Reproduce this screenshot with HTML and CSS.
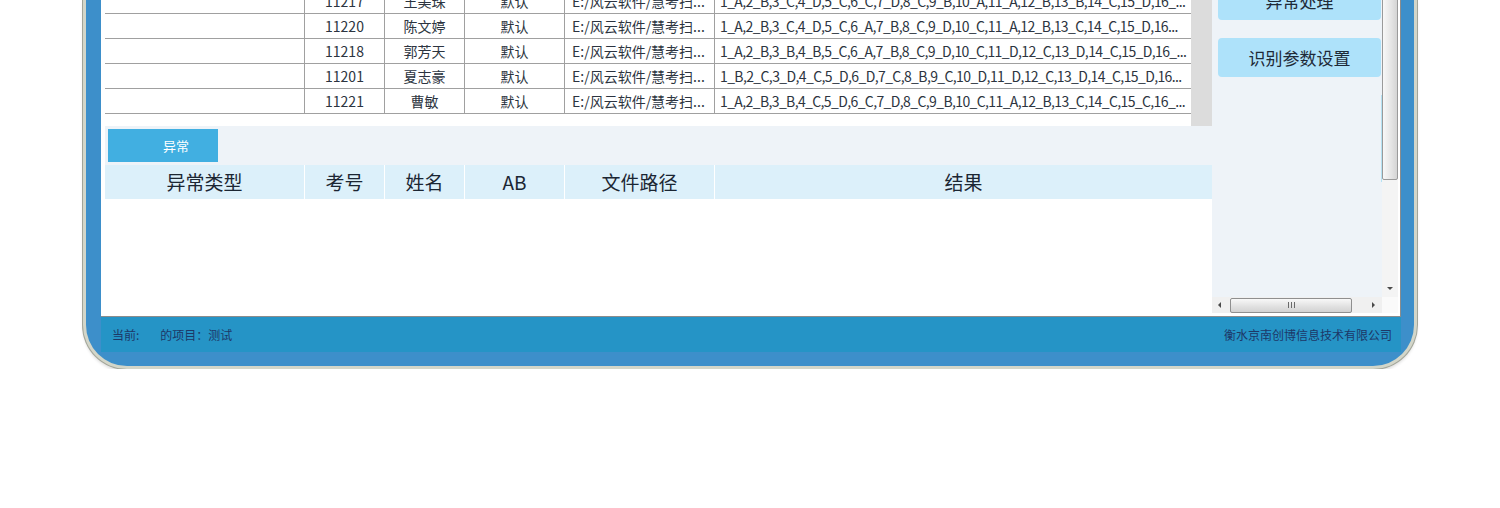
FILE: index.html
```html
<!DOCTYPE html>
<html lang="zh-CN">
<head>
    <meta charset="UTF-8">
    <title>识别结果</title>
    <link rel="stylesheet" href="styles.css">
</head>
<body>
<div class="window">
    <div class="panel">
        <div class="main">
            <!-- recognised sheets -->
            <div class="grid">
                <div class="rows">
                    <div class="row"><span class="c1"></span><span class="c2">11217</span><span class="c3">王美珠</span><span class="c4">默认</span><span class="c5">E:/风云软件/慧考扫...</span><span class="c6">1_A,2_B,3_C,4_D,5_C,6_C,7_D,8_C,9_B,10_A,11_A,12_B,13_B,14_C,15_D,16_...</span></div>
                    <div class="row"><span class="c1"></span><span class="c2">11220</span><span class="c3">陈文婷</span><span class="c4">默认</span><span class="c5">E:/风云软件/慧考扫...</span><span class="c6">1_A,2_B,3_C,4_D,5_C,6_A,7_B,8_C,9_D,10_C,11_A,12_B,13_C,14_C,15_D,16...</span></div>
                    <div class="row"><span class="c1"></span><span class="c2">11218</span><span class="c3">郭芳天</span><span class="c4">默认</span><span class="c5">E:/风云软件/慧考扫...</span><span class="c6">1_A,2_B,3_B,4_B,5_C,6_A,7_B,8_C,9_D,10_C,11_D,12_C,13_D,14_C,15_D,16_...</span></div>
                    <div class="row"><span class="c1"></span><span class="c2">11201</span><span class="c3">夏志豪</span><span class="c4">默认</span><span class="c5">E:/风云软件/慧考扫...</span><span class="c6">1_B,2_C,3_D,4_C,5_D,6_D,7_C,8_B,9_C,10_D,11_D,12_C,13_D,14_C,15_D,16...</span></div>
                    <div class="row"><span class="c1"></span><span class="c2">11221</span><span class="c3">曹敏</span><span class="c4">默认</span><span class="c5">E:/风云软件/慧考扫...</span><span class="c6">1_A,2_B,3_B,4_C,5_D,6_C,7_D,8_C,9_B,10_C,11_A,12_B,13_C,14_C,15_C,16_...</span></div>
                </div>
                <div class="grid-scroll"></div>
            </div>

            <div class="tabs"><div class="tab">异常</div></div>

            <!-- exceptions table (empty) -->
            <div class="head">
                <span class="c1">异常类型</span><span class="c2">考号</span><span class="c3">姓名</span><span class="c4">AB</span><span class="c5">文件路径</span><span class="c6">结果</span>
            </div>
            <div class="blank"></div>
        </div>

        <div class="side">
            <div class="side-top">
                <div class="side-body">
                    <button class="btn btn-first">异常处理</button>
                    <button class="btn">识别参数设置</button>
                    <div class="edge"></div>
                </div>
                <div class="vscroll">
                    <div class="thumb"></div>
                    <span class="arrow-down"></span>
                </div>
            </div>
            <div class="hscroll">
                <div class="htrack">
                    <span class="arrow-left"></span>
                    <div class="hthumb">
                        <svg width="7" height="6" viewBox="0 0 7 6"><path d="M0.5 0v6M3.5 0v6M6.5 0v6" stroke="#6a6a6a" stroke-width="1"/></svg>
                    </div>
                    <span class="arrow-right"></span>
                </div>
                <div class="hcorner"></div>
            </div>
        </div>
    </div>

    <div class="status">
        <span>当前:</span>
        <span class="project">的项目：测试</span>
        <span class="company">衡水京南创博信息技术有限公司</span>
    </div>
</div>
</body>
</html>
```

FILE: styles.css
```css
/* Basic styling */
body {
    margin: 0;
    background-color: #fff;
    font-family: "Noto Sans CJK SC", "Noto Sans", sans-serif;
    color: #2c3440;
}

/* Window frame */
.window {
    width: 1334px;
    margin-left: 83px;
    padding: 0 13px 14px 15px;
    box-sizing: border-box;
    background-color: #3d8fca;
    border: 3px solid #d3d6c9;
    border-top: none;
    border-radius: 0 0 44px 44px;
    box-shadow: 0 0 0 1px #a2a599, 0 3px 3px rgba(0, 0, 0, 0.12);
}

.panel {
    display: flex;
    width: 1300px;
    height: 317px;
    box-sizing: border-box;
    padding-right: 2px;
    background-color: #fff;
    border-right: 1px solid #8c8c8c;
    border-bottom: 1px solid #8c8c8c;
    overflow: hidden;
}

/* Left part: grids */
.main {
    width: 1111px;
    padding-left: 4px;
    box-sizing: border-box;
    display: flex;
    flex-direction: column;
}

.grid {
    display: flex;
    height: 137px;
    margin-top: -11px;
    flex-shrink: 0;
}

.rows {
    width: 1086px;
}

.grid-scroll {
    width: 21px;
    background-color: #dcdcdc;
}

.row {
    display: flex;
    height: 25px;
    box-sizing: border-box;
    border-bottom: 1px solid #a0a0a0;
    font-size: 14px;
    line-height: 24px;
}

.row span {
    box-sizing: border-box;
    border-right: 1px solid #a0a0a0;
    text-align: center;
    white-space: nowrap;
    overflow: hidden;
}

.c1 { width: 200px; }
.c2 { width: 80px; }
.c3 { width: 80px; }
.c4 { width: 100px; }
.c5 { width: 150px; }
.c6 { flex: 1; }

.row .c5 {
    text-align: left;
    padding: 0 2px 0 7px;
}

.row .c6 {
    text-align: left;
    padding: 0 2px 0 5px;
    border-right: none;
    letter-spacing: -0.62px;
}

.tabs {
    height: 39px;
    box-sizing: border-box;
    padding: 3px 0 0 3px;
    background-color: #eef3f8;
    flex-shrink: 0;
}

.tab {
    width: 110px;
    height: 33px;
    box-sizing: border-box;
    padding-left: 26px;
    background-color: #41afe1;
    color: #fff;
    font-size: 13px;
    line-height: 33px;
    text-align: center;
}

.head {
    display: flex;
    height: 34px;
    background-color: #dcf0fa;
    color: #1b2633;
    font-size: 19px;
    line-height: 34px;
    flex-shrink: 0;
}

.head span {
    box-sizing: border-box;
    border-right: 1px solid #fff;
    text-align: center;
}

.head .c6 {
    border-right: none;
}

.blank {
    flex: 1;
}

/* Right part: buttons and scrollbars */
.side {
    width: 186px;
    display: flex;
    flex-direction: column;
}

.side-top {
    display: flex;
    height: 297px;
}

.side-body {
    width: 170px;
    box-sizing: border-box;
    padding-left: 6px;
    display: flex;
    flex-direction: column;
    gap: 18px;
    background-color: #eef3f8;
    overflow: hidden;
}

.btn {
    width: 163px;
    height: 39px;
    flex-shrink: 0;
    border: none;
    border-radius: 4px;
    background-color: #aee2fa;
    color: #1e2a38;
    font-family: "Noto Sans CJK SC", "Noto Sans", sans-serif;
    font-size: 17px;
    padding: 0;
}

.btn-first {
    margin-top: -19px;
}

.edge {
    align-self: flex-end;
    width: 2px;
    height: 87px;
    border-right: 1px solid #b5e2f3;
}

.vscroll {
    width: 16px;
    display: flex;
    flex-direction: column;
    justify-content: space-between;
    align-items: center;
    background-color: #f4f4f4;
}

.thumb {
    width: 16px;
    height: 184px;
    margin-top: -4px;
    box-sizing: border-box;
    border: 1px solid #9a9a9a;
    border-radius: 2px;
    background: linear-gradient(to right, #f8f8f8, #e4e4e4 60%, #d4d4d4);
}

.arrow-down {
    width: 0;
    height: 0;
    border-left: 3px solid transparent;
    border-right: 3px solid transparent;
    border-top: 3px solid #4a4a4a;
    margin-bottom: 7px;
}

.hscroll {
    display: flex;
    height: 16px;
}

.htrack {
    width: 170px;
    display: flex;
    align-items: center;
    background-color: #f0f0f0;
}

.arrow-left {
    width: 0;
    height: 0;
    margin-left: 6px;
    border-top: 3px solid transparent;
    border-bottom: 3px solid transparent;
    border-right: 3px solid #4a4a4a;
}

.hthumb {
    width: 122px;
    height: 15px;
    margin-left: 9px;
    box-sizing: border-box;
    border: 1px solid #8f8f8f;
    border-radius: 2px;
    background: linear-gradient(#f8f8f8, #e0e0e0 60%, #d2d2d2);
    display: flex;
    align-items: center;
    justify-content: center;
}

.arrow-right {
    width: 0;
    height: 0;
    margin-left: 20px;
    border-top: 3px solid transparent;
    border-bottom: 3px solid transparent;
    border-left: 3px solid #4a4a4a;
}

.hcorner {
    width: 16px;
    background-color: #fafafa;
}

/* Status bar */
.status {
    display: flex;
    align-items: center;
    width: 1300px;
    height: 35px;
    box-sizing: border-box;
    padding: 0 9px 0 11px;
    background-color: #2594c6;
    color: #1d3868;
    font-size: 12px;
}

.project {
    margin-left: 21px;
}

.company {
    margin-left: auto;
}
```
